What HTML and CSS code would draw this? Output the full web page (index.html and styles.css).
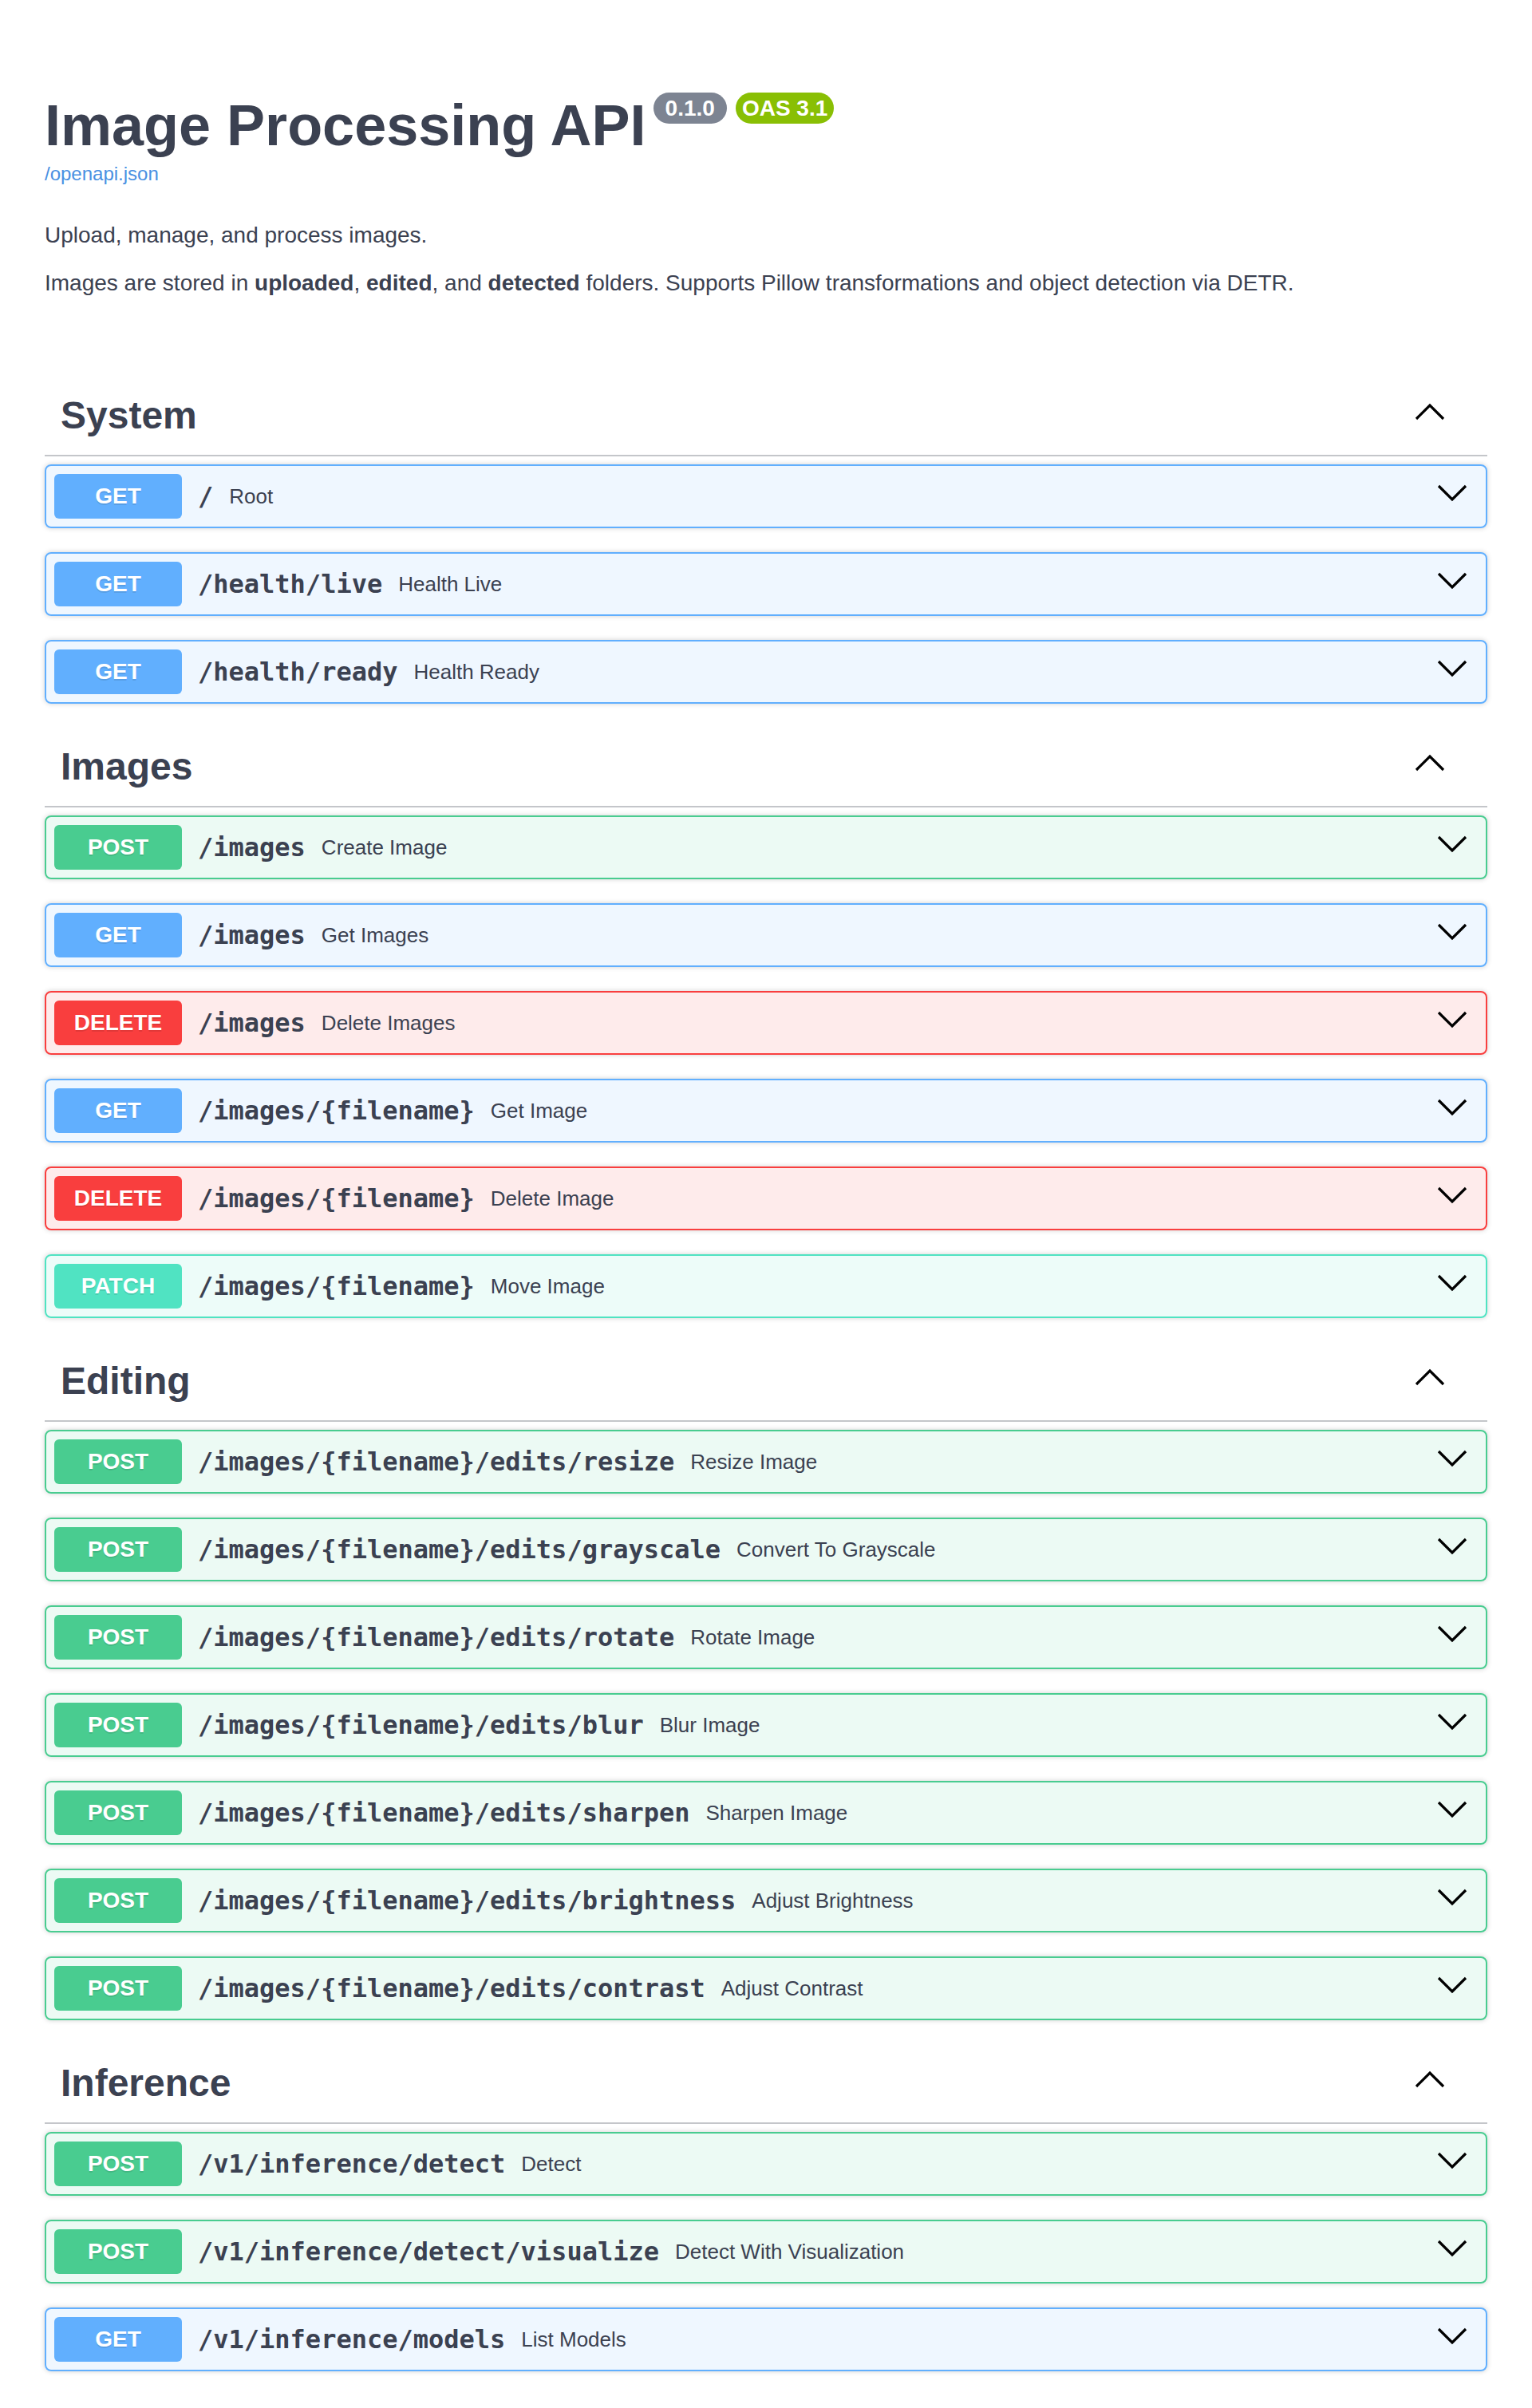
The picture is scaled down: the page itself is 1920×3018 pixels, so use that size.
FILE: index.html
```html
<!DOCTYPE html>
<html lang="en">
<head>
    <meta charset="UTF-8">
    <meta name="viewport" content="width=device-width, initial-scale=1.0">
    <title>Image Processing API - Swagger UI</title>
    <link rel="stylesheet" href="styles.css">
</head>
<body>
    <div class="wrapper">
        <!-- API info -->
        <div class="info">
            <div class="main">
                <h2 class="title">
                    <span>Image Processing API</span>
                    <span class="stamps">
                        <small class="version">0.1.0</small>
                        <small class="version oas">OAS 3.1</small>
                    </span>
                </h2>
                <a class="spec-link" href="#">/openapi.json</a>
            </div>
            <div class="description">
                <p>Upload, manage, and process images.</p>
                <p>Images are stored in <strong>uploaded</strong>, <strong>edited</strong>, and <strong>detected</strong> folders. Supports Pillow transformations and object detection via DETR.</p>
            </div>
        </div>

        <!-- System -->
        <section class="tag-section">
            <h3 class="tag">
                <span>System</span>
                <button class="expand" aria-label="Collapse"><svg viewBox="0 0 20 20"><polyline points="1.5,12 10,3.5 18.5,12"/></svg></button>
            </h3>
            <div class="op get"><span class="method">GET</span><span class="path">/</span><span class="summary">Root</span><svg class="arrow" viewBox="0 0 20 20"><polyline points="1.5,3.5 10,12 18.5,3.5"/></svg></div>
            <div class="op get"><span class="method">GET</span><span class="path">/health/live</span><span class="summary">Health Live</span><svg class="arrow" viewBox="0 0 20 20"><polyline points="1.5,3.5 10,12 18.5,3.5"/></svg></div>
            <div class="op get"><span class="method">GET</span><span class="path">/health/ready</span><span class="summary">Health Ready</span><svg class="arrow" viewBox="0 0 20 20"><polyline points="1.5,3.5 10,12 18.5,3.5"/></svg></div>
        </section>

        <!-- Images -->
        <section class="tag-section">
            <h3 class="tag">
                <span>Images</span>
                <button class="expand" aria-label="Collapse"><svg viewBox="0 0 20 20"><polyline points="1.5,12 10,3.5 18.5,12"/></svg></button>
            </h3>
            <div class="op post"><span class="method">POST</span><span class="path">/images</span><span class="summary">Create Image</span><svg class="arrow" viewBox="0 0 20 20"><polyline points="1.5,3.5 10,12 18.5,3.5"/></svg></div>
            <div class="op get"><span class="method">GET</span><span class="path">/images</span><span class="summary">Get Images</span><svg class="arrow" viewBox="0 0 20 20"><polyline points="1.5,3.5 10,12 18.5,3.5"/></svg></div>
            <div class="op delete"><span class="method">DELETE</span><span class="path">/images</span><span class="summary">Delete Images</span><svg class="arrow" viewBox="0 0 20 20"><polyline points="1.5,3.5 10,12 18.5,3.5"/></svg></div>
            <div class="op get"><span class="method">GET</span><span class="path">/images/{filename}</span><span class="summary">Get Image</span><svg class="arrow" viewBox="0 0 20 20"><polyline points="1.5,3.5 10,12 18.5,3.5"/></svg></div>
            <div class="op delete"><span class="method">DELETE</span><span class="path">/images/{filename}</span><span class="summary">Delete Image</span><svg class="arrow" viewBox="0 0 20 20"><polyline points="1.5,3.5 10,12 18.5,3.5"/></svg></div>
            <div class="op patch"><span class="method">PATCH</span><span class="path">/images/{filename}</span><span class="summary">Move Image</span><svg class="arrow" viewBox="0 0 20 20"><polyline points="1.5,3.5 10,12 18.5,3.5"/></svg></div>
        </section>

        <!-- Editing -->
        <section class="tag-section">
            <h3 class="tag">
                <span>Editing</span>
                <button class="expand" aria-label="Collapse"><svg viewBox="0 0 20 20"><polyline points="1.5,12 10,3.5 18.5,12"/></svg></button>
            </h3>
            <div class="op post"><span class="method">POST</span><span class="path">/images/{filename}/edits/resize</span><span class="summary">Resize Image</span><svg class="arrow" viewBox="0 0 20 20"><polyline points="1.5,3.5 10,12 18.5,3.5"/></svg></div>
            <div class="op post"><span class="method">POST</span><span class="path">/images/{filename}/edits/grayscale</span><span class="summary">Convert To Grayscale</span><svg class="arrow" viewBox="0 0 20 20"><polyline points="1.5,3.5 10,12 18.5,3.5"/></svg></div>
            <div class="op post"><span class="method">POST</span><span class="path">/images/{filename}/edits/rotate</span><span class="summary">Rotate Image</span><svg class="arrow" viewBox="0 0 20 20"><polyline points="1.5,3.5 10,12 18.5,3.5"/></svg></div>
            <div class="op post"><span class="method">POST</span><span class="path">/images/{filename}/edits/blur</span><span class="summary">Blur Image</span><svg class="arrow" viewBox="0 0 20 20"><polyline points="1.5,3.5 10,12 18.5,3.5"/></svg></div>
            <div class="op post"><span class="method">POST</span><span class="path">/images/{filename}/edits/sharpen</span><span class="summary">Sharpen Image</span><svg class="arrow" viewBox="0 0 20 20"><polyline points="1.5,3.5 10,12 18.5,3.5"/></svg></div>
            <div class="op post"><span class="method">POST</span><span class="path">/images/{filename}/edits/brightness</span><span class="summary">Adjust Brightness</span><svg class="arrow" viewBox="0 0 20 20"><polyline points="1.5,3.5 10,12 18.5,3.5"/></svg></div>
            <div class="op post"><span class="method">POST</span><span class="path">/images/{filename}/edits/contrast</span><span class="summary">Adjust Contrast</span><svg class="arrow" viewBox="0 0 20 20"><polyline points="1.5,3.5 10,12 18.5,3.5"/></svg></div>
        </section>

        <!-- Inference -->
        <section class="tag-section">
            <h3 class="tag">
                <span>Inference</span>
                <button class="expand" aria-label="Collapse"><svg viewBox="0 0 20 20"><polyline points="1.5,12 10,3.5 18.5,12"/></svg></button>
            </h3>
            <div class="op post"><span class="method">POST</span><span class="path">/v1/inference/detect</span><span class="summary">Detect</span><svg class="arrow" viewBox="0 0 20 20"><polyline points="1.5,3.5 10,12 18.5,3.5"/></svg></div>
            <div class="op post"><span class="method">POST</span><span class="path">/v1/inference/detect/visualize</span><span class="summary">Detect With Visualization</span><svg class="arrow" viewBox="0 0 20 20"><polyline points="1.5,3.5 10,12 18.5,3.5"/></svg></div>
            <div class="op get"><span class="method">GET</span><span class="path">/v1/inference/models</span><span class="summary">List Models</span><svg class="arrow" viewBox="0 0 20 20"><polyline points="1.5,3.5 10,12 18.5,3.5"/></svg></div>
        </section>
    </div>
</body>
</html>
```

FILE: styles.css
```css
/* General */
body {
    margin: 16px;
    background: #fff;
    color: #3b4151;
    font-family: "Liberation Sans", Arial, sans-serif;
}

.wrapper {
    padding: 0 40px;
}

/* Info block */
.info {
    margin: 100px 0 96px;
}

.main {
    margin-bottom: 42px;
}

.title {
    display: flex;
    align-items: flex-start;
    margin: 0;
    font-size: 72px;
    font-weight: bold;
    color: #3b4151;
}

.stamps {
    display: flex;
    gap: 11px;
    margin-left: 9px;
}

.version {
    padding: 4px 15px;
    border-radius: 114px;
    background: #7d8492;
    color: #fff;
    font-size: 28px;
    font-weight: bold;
    line-height: 31px;
}

.version.oas {
    padding: 4px 8px;
    background: #89bf04;
}

.spec-link {
    display: block;
    margin-top: 6px;
    font-size: 24px;
    line-height: 28px;
    color: #4990e2;
    text-decoration: none;
}

.description p {
    margin: 18px 0;
    font-size: 28px;
    line-height: 42px;
}

/* Tag headings */
.tag {
    display: flex;
    align-items: center;
    margin: 0 0 10px;
    padding: 20px 52px 20px 20px;
    border-bottom: 2px solid rgba(59, 65, 81, 0.3);
    font-size: 48px;
    line-height: 58px;
    font-weight: bold;
}

.expand {
    margin-left: auto;
    padding: 0;
    border: none;
    background: none;
    width: 40px;
    height: 40px;
    cursor: pointer;
}

.expand svg,
.arrow {
    display: block;
    width: 40px;
    height: 40px;
    fill: none;
    stroke: #000;
    stroke-width: 1.6;
}

/* Operation rows */
.op {
    display: flex;
    align-items: center;
    margin-bottom: 30px;
    padding: 10px;
    border: 2px solid;
    border-radius: 8px;
    box-shadow: 0 0 6px rgba(0, 0, 0, 0.19);
}

.method {
    min-width: 160px;
    padding: 12px 0;
    border-radius: 6px;
    color: #fff;
    font-size: 28px;
    line-height: 32px;
    font-weight: bold;
    text-align: center;
    text-shadow: 0 2px 0 rgba(0, 0, 0, 0.1);
}

.path {
    padding: 0 20px;
    font-family: "DejaVu Sans Mono", monospace;
    font-size: 32px;
    font-weight: bold;
    color: #3b4151;
}

.summary {
    font-size: 26px;
    color: #3b4151;
}

.arrow {
    margin: 0 12px 0 auto;
}

.get {
    border-color: #61affe;
    background: rgba(97, 175, 254, 0.1);
}

.get .method {
    background: #61affe;
}

.post {
    border-color: #49cc90;
    background: rgba(73, 204, 144, 0.1);
}

.post .method {
    background: #49cc90;
}

.delete {
    border-color: #f93e3e;
    background: rgba(249, 62, 62, 0.1);
}

.delete .method {
    background: #f93e3e;
}

.patch {
    border-color: #50e3c2;
    background: rgba(80, 227, 194, 0.1);
}

.patch .method {
    background: #50e3c2;
}
```
